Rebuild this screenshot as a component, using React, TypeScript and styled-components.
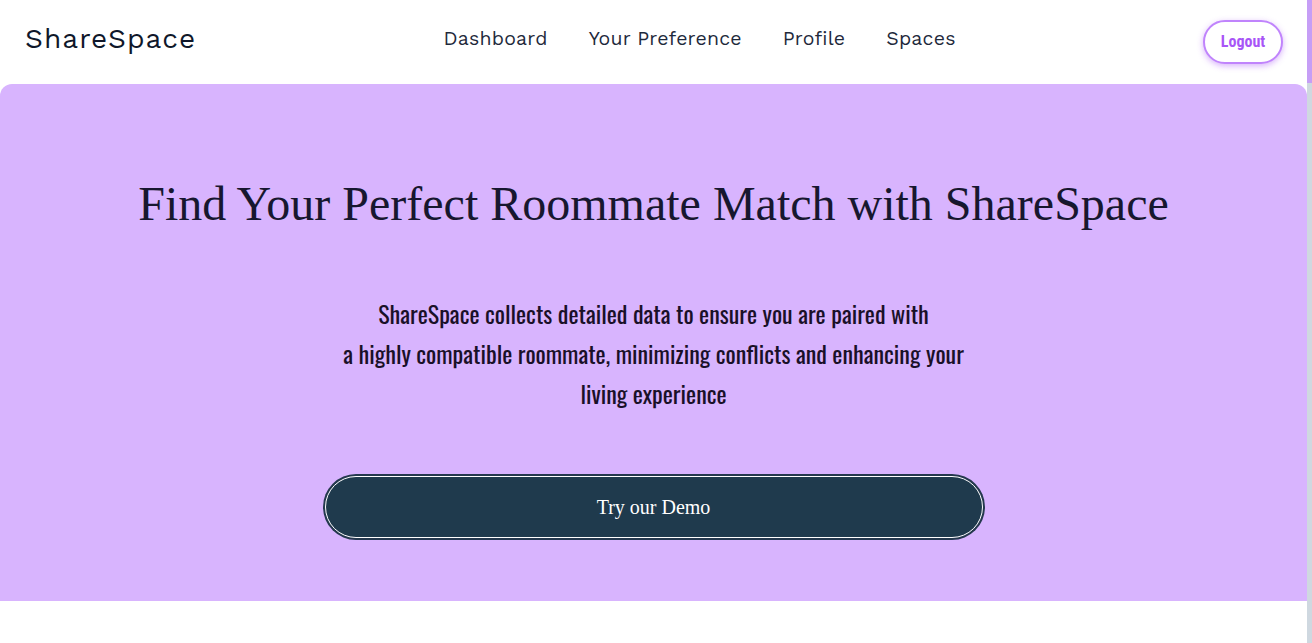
import React from "react";
import styled, { createGlobalStyle } from "styled-components";

const Global = createGlobalStyle`
  html, body { margin: 0; padding: 0; background: #ffffff; }
  body { font-family: "Liberation Serif", serif; overflow: hidden; }
`;

const Page = styled.div`
  display: flex;
  flex-direction: column;
  width: calc(100% - 5px);
`;

const ScrollTrack = styled.div`
  position: fixed;
  top: 0;
  right: 0;
  width: 5px;
  height: 100vh;
  background: #cfd8e0;
`;

const ScrollThumb = styled.div`
  width: 100%;
  height: 83px;
  background: #c69ef6;
`;

const Header = styled.header`
  height: 84px;
  display: flex;
  align-items: center;
  justify-content: space-between;
  padding: 0 24px 0 25px;
  box-sizing: border-box;
`;

const Logo = styled.div`
  font-family: "Work Sans", "Open Sans", "Inter", sans-serif;
  font-size: 28px;
  color: #0f172a;
  letter-spacing: 1px;
  margin-top: -8px;
`;

const Nav = styled.nav`
  display: flex;
  gap: 41px;
  margin-top: -7px;
`;

const NavLink = styled.a`
  font-family: "Work Sans", "Open Sans", "Inter", sans-serif;
  font-size: 19.5px;
  color: #1e293b;
  text-decoration: none;
  letter-spacing: 0.2px;
`;

const LogoutButton = styled.button`
  width: 80px;
  height: 44px;
  border: 2px solid #c084fc;
  border-radius: 22px;
  background: #ffffff;
  color: #a855f7;
  font-family: "Roboto Condensed", "Roboto", sans-serif;
  font-stretch: condensed;
  font-weight: 700;
  font-size: 16px;
  box-shadow: 0 2px 6px rgba(168, 85, 247, 0.45);
  cursor: pointer;
  margin-top: -1px;
`;

const Hero = styled.section`
  background: #d8b4fe;
  border-radius: 12px 12px 0 0;
  height: 517px;
  display: flex;
  flex-direction: column;
  align-items: center;
  box-sizing: border-box;
  padding-top: 92px;
`;

const Title = styled.h1`
  margin: 0;
  text-align: center;
  font-family: "Liberation Serif", serif;
  font-weight: 400;
  font-size: 48px;
  line-height: 56px;
  color: #17172f;
`;

const Lead = styled.p`
  margin: 61px 0 0;
  text-align: center;
  font-family: "Oswald", "Liberation Sans Narrow", "DejaVu Sans Condensed", sans-serif;
  font-size: 24px;
  line-height: 40px;
  color: #1a1028;
`;

const DemoButton = styled.button`
  margin-top: 63px;
  width: 658px;
  height: 62px;
  border-radius: 31px;
  background: #1f3a4d;
  border: 1px solid #ffffff;
  box-shadow: 0 0 0 2px #25384e;
  color: #ffffff;
  font-family: "Liberation Serif", serif;
  font-size: 20px;
  cursor: pointer;
`;

const Below = styled.section`
  height: 400px;
  background: #ffffff;
`;

export default function App() {
  return (
    <Page>
      <Global />
      <Header>
        <Logo>ShareSpace</Logo>
        <Nav>
          <NavLink href="#">Dashboard</NavLink>
          <NavLink href="#">Your Preference</NavLink>
          <NavLink href="#">Profile</NavLink>
          <NavLink href="#">Spaces</NavLink>
        </Nav>
        <LogoutButton>Logout</LogoutButton>
      </Header>
      <Hero>
        <Title>Find Your Perfect Roommate Match with ShareSpace</Title>
        <Lead>
          ShareSpace collects detailed data to ensure you are paired with
          <br />
          a highly compatible roommate, minimizing conflicts and enhancing your
          <br />
          living experience
        </Lead>
        <DemoButton>Try our Demo</DemoButton>
      </Hero>
      <Below />
      <ScrollTrack>
        <ScrollThumb />
      </ScrollTrack>
    </Page>
  );
}
